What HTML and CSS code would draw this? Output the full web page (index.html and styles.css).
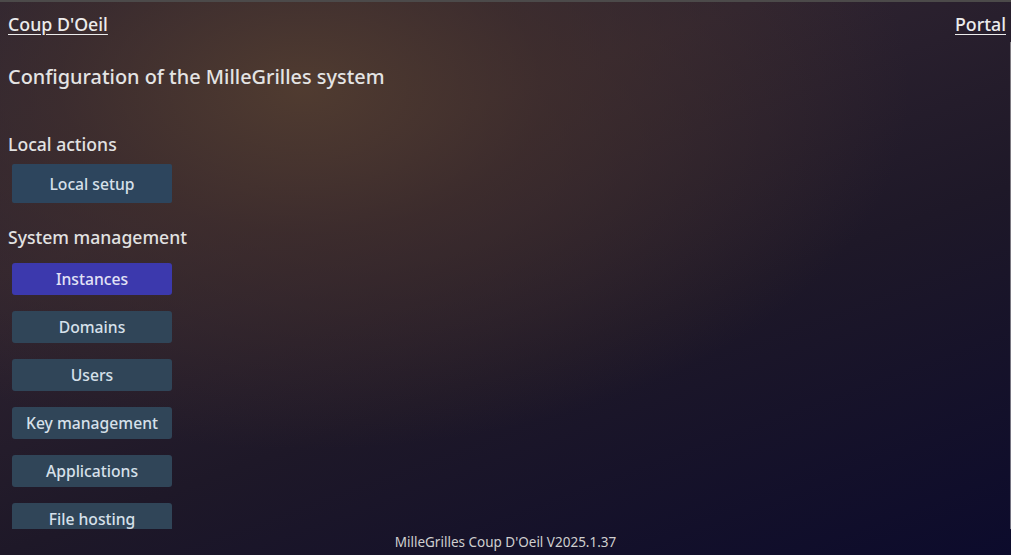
FILE: index.html
```html
<!DOCTYPE html>
<html lang="en">
<head>
<meta charset="utf-8">
<title>Coup D'Oeil</title>
<link rel="stylesheet" href="styles.css">
</head>
<body>
<div class="app">
  <header class="topbar">
    <a class="toplink" href="#">Coup D'Oeil</a>
    <a class="toplink" href="#">Portal</a>
  </header>
  <main class="content">
    <h1 class="title">Configuration of the MilleGrilles system</h1>
    <h2 class="section">Local actions</h2>
    <div class="actions">
      <button class="btn btn-local">Local setup</button>
    </div>
    <h2 class="section section-sys">System management</h2>
    <div class="menu">
      <button class="btn btn-active">Instances</button>
      <button class="btn">Domains</button>
      <button class="btn">Users</button>
      <button class="btn">Key management</button>
      <button class="btn">Applications</button>
      <button class="btn">File hosting</button>
    </div>
    <div class="scrollthumb"></div>
  </main>
  <footer class="footer">MilleGrilles Coup D'Oeil V2025.1.37</footer>
</div>
</body>
</html>
```

FILE: styles.css
```css
html, body {
  margin: 0;
  padding: 0;
  height: 100%;
}
body {
  font-family: "Noto Sans", "Open Sans", sans-serif;
  color: #e2e2e2;
  background:
    radial-gradient(ellipse 60% 65% at 30% 16%, rgba(84,62,48,0.9) 0%, rgba(70,50,44,0.65) 40%, rgba(50,36,42,0) 100%),
    linear-gradient(160deg, #231f35 0%, #2e2330 30%, #1e1828 60%, #0c0b2c 100%);
}
.app {
  box-sizing: border-box;
  height: 100vh;
  display: flex;
  flex-direction: column;
  border-top: 2px solid #4c4a4a;
  overflow: hidden;
}
.topbar {
  display: flex;
  justify-content: space-between;
  align-items: center;
  padding: 10px 5px 0 8px;
  height: 24px;
}
.toplink {
  color: #ececec;
  font-size: 17.8px;
  font-weight: 500;
  line-height: 24px;
  text-decoration: underline;
  text-underline-offset: 3px;
}
.content {
  position: relative;
  flex: 1;
  overflow: hidden;
  padding-left: 8px;
}
.title {
  margin: 27px 0 0 0;
  font-size: 19.9px;
  font-weight: 500;
  line-height: 28px;
  color: #e4e4e4;
}
.section {
  margin: 41px 0 0 0;
  font-size: 17.6px;
  font-weight: 500;
  line-height: 24px;
  color: #e2e2e2;
}
.section-sys {
  margin-top: 22px;
}
.actions {
  margin: 8px 0 0 4px;
}
.menu {
  margin: 14px 0 0 4px;
  display: flex;
  flex-direction: column;
  gap: 16px;
}
.btn {
  display: block;
  width: 160px;
  height: 32px;
  flex: none;
  border: none;
  border-radius: 3px;
  background: #304558;
  color: #d6e0ea;
  font-family: inherit;
  font-size: 15.7px;
  font-weight: 500;
  padding: 0;
}
.btn-local {
  height: 39px;
  border-radius: 2px;
  background: #2d455d;
}
.btn-active {
  background: #3c39ad;
  color: #e2e2f6;
}
.scrollthumb {
  position: absolute;
  right: 0;
  top: 6px;
  width: 1px;
  height: 500px;
  background: rgba(200,200,200,0.55);
}
.footer {
  height: 26px;
  line-height: 26px;
  text-align: center;
  font-size: 13.5px;
  color: #cfcfcf;
}
```
